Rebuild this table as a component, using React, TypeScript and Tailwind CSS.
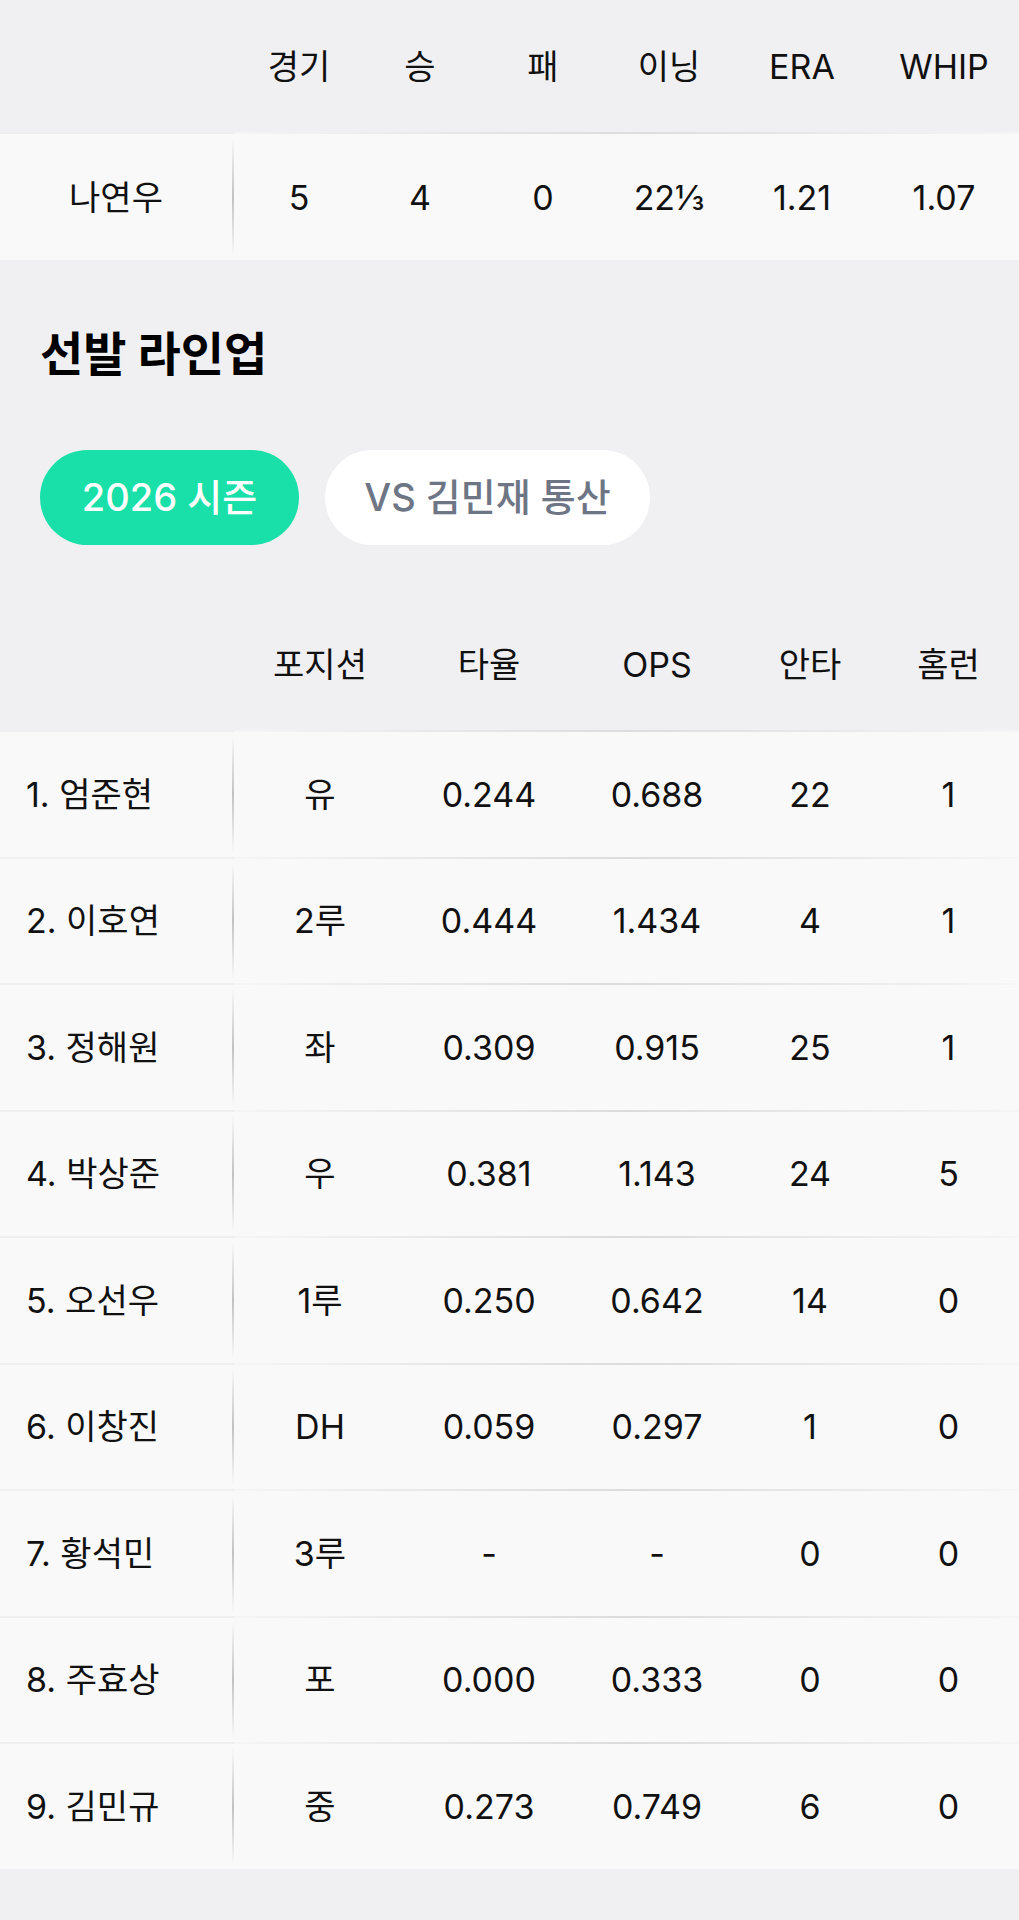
import React from 'react';

const pitchCols = [
  { label: '경기', w: 'w-[130px]' },
  { label: '승', w: 'w-[112px]' },
  { label: '패', w: 'w-[134px]' },
  { label: '이닝', w: 'w-[118px]' },
  { label: 'ERA', w: 'w-[148px]' },
  { label: 'WHIP', w: 'w-[136px]' },
];

const pitcher = { name: '나연우', stats: ['5', '4', '0', '22⅓', '1.21', '1.07'] };

const lineupCols = [
  { label: '포지션', w: 'w-[172px]' },
  { label: '타율', w: 'w-[166px]' },
  { label: 'OPS', w: 'w-[170px]' },
  { label: '안타', w: 'w-[136px]' },
  { label: '홈런', w: 'w-[141px]' },
];

const lineup = [
  { name: '1. 엄준현', stats: ['유', '0.244', '0.688', '22', '1'] },
  { name: '2. 이호연', stats: ['2루', '0.444', '1.434', '4', '1'] },
  { name: '3. 정해원', stats: ['좌', '0.309', '0.915', '25', '1'] },
  { name: '4. 박상준', stats: ['우', '0.381', '1.143', '24', '5'] },
  { name: '5. 오선우', stats: ['1루', '0.250', '0.642', '14', '0'] },
  { name: '6. 이창진', stats: ['DH', '0.059', '0.297', '1', '0'] },
  { name: '7. 황석민', stats: ['3루', '-', '-', '0', '0'] },
  { name: '8. 주효상', stats: ['포', '0.000', '0.333', '0', '0'] },
  { name: '9. 김민규', stats: ['중', '0.273', '0.749', '6', '0'] },
];

const Separator = () => (
  <div className="flex h-[2px]">
    <div className="w-[234px] bg-[#efefef]" />
    <div className="flex-1 bg-linear-to-r from-[#f5f5f5] via-[#dcdcdc] to-[#f5f5f5]" />
  </div>
);

const NameDivider = () => (
  <div className="w-[2px] self-stretch my-[4px] bg-linear-to-b from-transparent via-[#c2c2c2] to-transparent" />
);

export default function App() {
  return (
    <div className="min-h-[1920px] w-[1019px] bg-[#f0f0f2] font-['Inter','Noto_Sans_CJK_KR',sans-serif] text-[#111111]">
      {/* 투수 기록 */}
      <div className="flex h-[132px] items-center text-[34px]">
        <div className="w-[234px]" />
        {pitchCols.map((c) => (
          <div key={c.label} className={`${c.w} text-center`}>
            {c.label}
          </div>
        ))}
      </div>
      <Separator />
      <div className="flex h-[126px] bg-[#f9f9f9] text-[34px]">
        <div className="flex w-[234px] items-center">
          <div className="flex-1 text-center">{pitcher.name}</div>
          <NameDivider />
        </div>
        {pitcher.stats.map((s, i) => (
          <div key={i} className={`${pitchCols[i].w} flex items-center justify-center`}>
            {s}
          </div>
        ))}
      </div>

      {/* 선발 라인업 */}
      <h2 className="mt-[66px] px-[40px] text-[47px] font-bold leading-[56px] text-black">선발 라인업</h2>

      <div className="mt-[68px] flex gap-[26px] px-[40px]">
        <button className="h-[95px] w-[259px] rounded-full bg-[#18e0a8] text-[38px] font-medium text-white">
          2026 시즌
        </button>
        <button className="h-[95px] w-[325px] rounded-full bg-white text-[38px] font-medium text-[#6e7685]">
          VS 김민재 통산
        </button>
      </div>

      <div className="mt-[53px] flex h-[132px] items-center text-[34px]">
        <div className="w-[234px]" />
        {lineupCols.map((c) => (
          <div key={c.label} className={`${c.w} text-center`}>
            {c.label}
          </div>
        ))}
      </div>

      {lineup.map((p) => (
        <div key={p.name}>
          <Separator />
          <div className="flex h-[124.5px] bg-[#f9f9f9] text-[34px]">
            <div className="flex w-[234px] items-center">
              <div className="flex-1 pl-[26px]">{p.name}</div>
              <NameDivider />
            </div>
            {p.stats.map((s, i) => (
              <div key={i} className={`${lineupCols[i].w} flex items-center justify-center`}>
                {s}
              </div>
            ))}
          </div>
        </div>
      ))}
    </div>
  );
}
